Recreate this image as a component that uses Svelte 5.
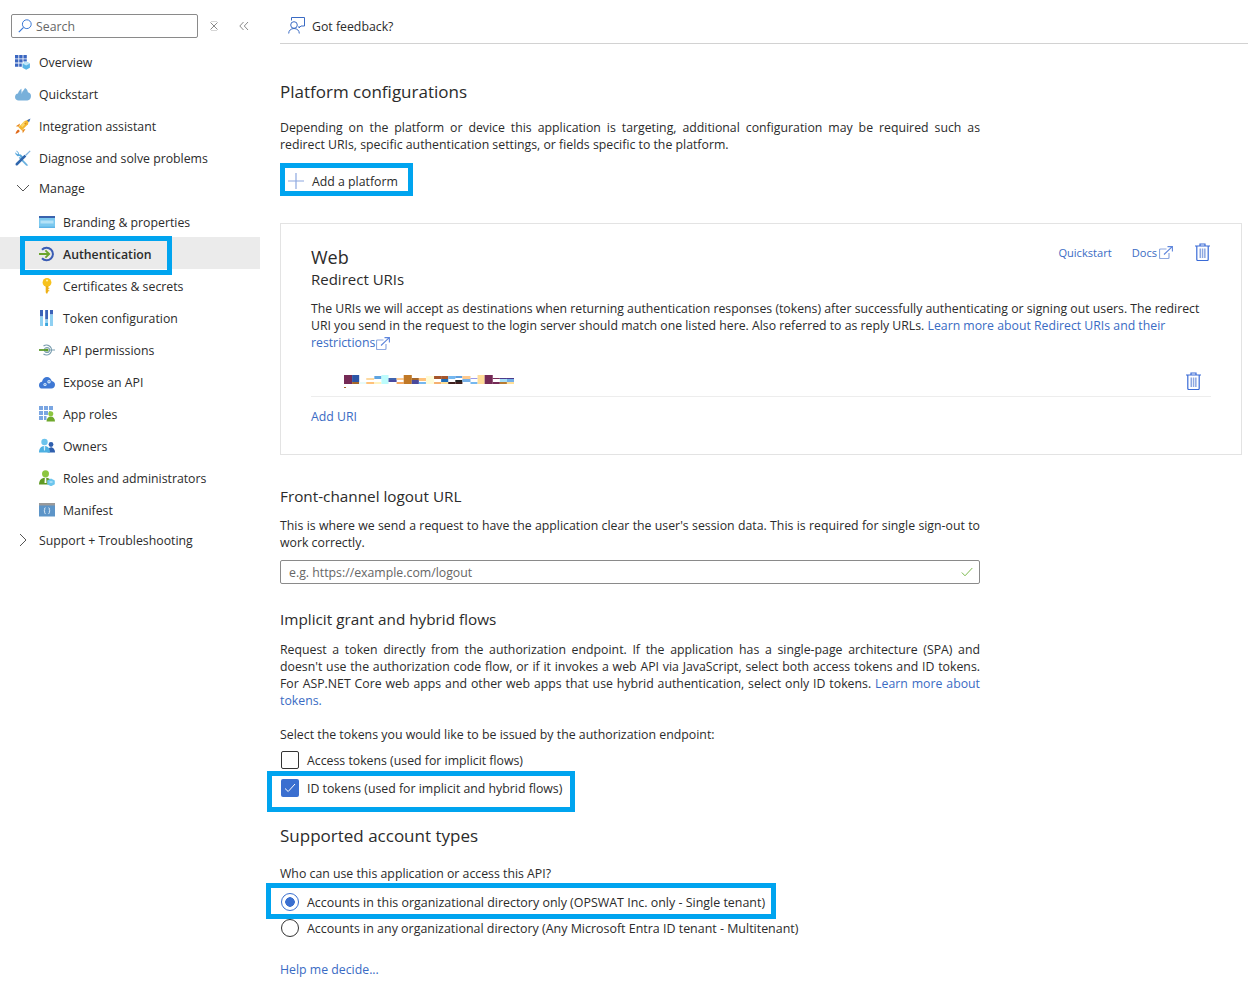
<script>
  const navTop = [
    { label: 'Overview', icon: 'overview' },
    { label: 'Quickstart', icon: 'quickstart' },
    { label: 'Integration assistant', icon: 'rocket' },
    { label: 'Diagnose and solve problems', icon: 'tools' }
  ];
  const navManage = [
    { label: 'Branding & properties', icon: 'branding' },
    { label: 'Authentication', icon: 'auth', active: true },
    { label: 'Certificates & secrets', icon: 'key' },
    { label: 'Token configuration', icon: 'token' },
    { label: 'API permissions', icon: 'api' },
    { label: 'Expose an API', icon: 'expose' },
    { label: 'App roles', icon: 'roles' },
    { label: 'Owners', icon: 'owners' },
    { label: 'Roles and administrators', icon: 'admins' },
    { label: 'Manifest', icon: 'manifest' }
  ];
  // blurred-out redirect uri, [x, y, w, h, colour]
  const redacted = [
    [0,0,8,9,'#752a56'],[8,0,7,7,'#2b55a6'],[8,7,7,2,'#a5662a'],[15,7,7,2,'#e6fbfb'],[22,3,8,2,'#fdd9a0'],[22,7,8,2,'#ffc27a'],
    [30,1,7,3,'#5ea4e0'],[30,4,7,3,'#fff'],[30,7,7,2,'#fff3c0'],[37,0,7,9,'#bdfcfc'],[44,3,8,2,'#3f63ae'],[44,5,8,2,'#4a4aa0'],[52,3,7,2,'#ffc98c'],[52,7,7,2,'#f5a860'],
    [59,0,8,9,'#c07826'],[67,3,7,2,'#a5662a'],[67,5,7,4,'#4a4a9c'],[74,3,7,3,'#ffc27a'],[74,7,7,2,'#75b8f0'],[81,1,8,8,'#fefbd8'],
    [89,1,7,3,'#a5552a'],[89,7,7,2,'#f5b070'],[96,1,7,3,'#a5552a'],[96,4,7,3,'#1f6db8'],[96,7,7,2,'#ffdf98'],[103,1,7,3,'#75b8f0'],[103,7,7,2,'#40201f'],
    [110,1,7,2,'#5e9fe0'],[110,5,7,2,'#222'],[110,7,7,2,'#40201f'],[117,1,8,3,'#ffc98c'],[117,4,8,3,'#75b0e8'],[125,3,7,1,'#9a9ae8'],[125,7,7,2,'#75b8f0'],
    [132,0,7,9,'#ffdd98'],[139,0,8,9,'#752a56'],[147,3,7,1,'#752a56'],[147,7,7,2,'#752a56'],[154,3,7,1,'#4a3a8c'],[154,4,7,3,'#a8e0f8'],[154,7,7,2,'#b87a30'],[161,3,7,1,'#4a3a8c'],[161,4,7,3,'#75b0e8'],[161,7,7,2,'#ffdf98'],
    [0,12,2,1,'#a5662a']
  ];
</script>

{#snippet navIcon(name)}
  <svg class="nav-icon" viewBox="0 0 16 16" width="16" height="16" aria-hidden="true">
    {#if name === 'overview'}
      <path fill="#3a66c0" d="M0 1h3.400v3.400H0zM4.200 1h3.400v3.400H4.200zM8.400 1h3.400v3.400H8.400zM0 5.200h3.400v3.400H0zM4.200 5.200h3.400v3.400H4.200zM8.400 5.200h3.400v2.400H8.400zM0 9.400h3.400v3.400H0zM4.200 9.400h2.600v3.400H4.200z"/>
      <path fill="#58b4e6" d="M7.500 9.500l3.700-2 3.700 2v4.200l-3.700 2-3.700-2z"/>
      <path fill="#bfe6f8" d="M7.500 9.500l3.700 2 3.700-2-3.700-2z"/>
    {:else if name === 'quickstart'}
      <path fill="#78b0da" d="M3.600 14.500C1.600 14.500 0 13 0 11c0-1.800 1.300-3.200 3-3.400C3.400 5.600 5 3.500 6.500 2.800L7.300 6l2.800-4c1.300.7 2.500 2.200 2.800 4.200 1.800.3 3.100 1.500 3.100 3.900 0 2.500-1.500 4.400-3.600 4.400z"/>
      <path fill="#cfe4f4" d="M7.300 6 6.500 2.800l-.6.5.8 4.700z"/>
    {:else if name === 'rocket'}
      <path fill="#e8891c" d="M5 5.500.8 8.200l3.400.5zM10.500 11l-2.700 4.300-.6-3.500z"/>
      <path fill="#e06a1a" d="M3.300 11.500c-1.400.8-2.500 2.500-2.800 4.200 1.800-.3 3.500-1.400 4.300-2.800z"/>
      <path fill="#f3b72e" d="M3.500 9.200 9.500 3 14 1.500 13 6.300 6.800 12.500z"/>
      <path fill="#fbd869" d="M6 7 9.500 3l2 2-4.500 4.500z"/>
      <circle cx="10.400" cy="5.600" r="1" fill="#e08a1a"/>
      <path fill="#3f6fb8" d="M12 2.200 15.500.5 14 4.200z"/>
    {:else if name === 'tools'}
      <path fill="#5aa8dc" d="M1.700 .6 4 2.900l-.1 1.400 2 .3L8 6.800 6.700 8.200 4.500 6 2.500 6.200.4 4 .3 2.200l2 2 1-.9-2-2z"/>
      <path fill="#5aa8dc" d="M5.200 7 7 8.800 12 14l1.200 1.600-1.900.2-6.600-6.900-1-1.500z" opacity=".9"/>
      <path fill="#2f66ad" d="M.8 13.300 9.500 4.700l1.800 1.800-8.700 8.800c-.5.400-1.300.4-1.800 0-.4-.6-.4-1.500 0-2z"/>
      <path fill="#7fb3df" d="M10 5 14.800.4l.8.8L11 6z"/>
    {:else if name === 'branding'}
      <rect x="0" y="2" width="16" height="12" fill="#7cc9ef"/>
      <rect x="0" y="2" width="16" height="2" fill="#3a62ad"/>
      <rect x="0" y="12.600" width="16" height="1.400" fill="#5eb4e6"/>
      <rect x="1.500" y="6.500" width="13" height="3" fill="#b4e2f7"/>
    {:else if name === 'auth'}
      <path fill="none" stroke="#3a5cb4" stroke-width="2" d="M3 3.700A6.300 6.300 0 1 1 3 12.300"/>
      <path fill="none" stroke="#6aa52d" stroke-width="1.800" d="M0 8h10M6.400 4.300 10.200 8l-3.800 3.700"/>
    {:else if name === 'key'}
      <circle cx="8" cy="4.400" r="4.400" fill="#f7c21d"/>
      <circle cx="8" cy="2.400" r="1" fill="#fff2b8"/>
      <path fill="#eeb015" d="M6.700 8h2.600v1.800h1v1h-1v1.400h1v1h-1L8 16l-1.300-1.500z"/>
    {:else if name === 'token'}
      <path fill="#3c62b8" d="M1 0h3v6.500H1zM6.200 0h2.800v9.500H6.200zM11 0h3v4.500h-3z"/>
      <path fill="#8fd0f2" d="M1 6.500h3V16H1zM6.200 9.500h2.800V16H6.200zM11 4.500h3V16h-3z"/>
      <path fill="#3aa5dc" d="M6.200 13h2.800v3H6.200z"/>
    {:else if name === 'api'}
      <path fill="none" stroke="#7a9eb0" stroke-width="1.200" d="M4.500 4a5 5 0 1 1 0 8M11 8h5"/>
      <circle cx="8" cy="8" r="2.500" fill="#fff" stroke="#7a9eb0" stroke-width="1.200"/>
      <path fill="none" stroke="#5c9a2e" stroke-width="1.800" d="M0 8h8"/>
      <circle cx="8" cy="8" r="1.500" fill="#5c9a2e"/>
    {:else if name === 'expose'}
      <path fill="#3e78d4" d="M3.500 14.500A3.400 3.400 0 0 1 0 11C0 9.200 1.300 7.900 3 7.800 3.600 5 5.600 3 8 3c2.300 0 4.200 1.700 4.700 4 1.900.2 3.300 1.700 3.300 3.700 0 2.100-1.600 3.800-3.600 3.800z"/>
      <circle cx="6" cy="10.500" r="1.600" fill="#d8ecfa"/>
      <circle cx="10" cy="7.700" r="1.700" fill="#d8ecfa"/>
      <circle cx="6" cy="10.500" r=".6" fill="#3e78d4"/>
      <circle cx="10" cy="7.700" r=".6" fill="#3e78d4"/>
    {:else if name === 'roles'}
      <path fill="#7aa6e2" d="M0 0h4v4H0zM5 0h4v4H5zM10 0h4v4h-4zM0 5h4v4H0zM5 5h4v4H5zM10 5h1.500v1H10zM0 10h4v4H0zM5 10h2.500v4H5z"/>
      <circle cx="11.800" cy="7.800" r="2.500" fill="#8cc63f"/>
      <path fill="#6fa82c" d="M7.500 15.500c0-3 1.800-5 4.300-5s4.200 2 4.200 5z"/>
    {:else if name === 'owners'}
      <circle cx="12" cy="6.500" r="2.400" fill="#2f5fae"/>
      <path fill="#2f5fae" d="M8.500 14.500c0-3 1.500-5.200 3.500-5.200s4 2.200 4 5.200z"/>
      <circle cx="5.500" cy="4" r="3.200" fill="#6cc3ec"/>
      <path fill="#4db0e2" d="M0 14.500c0-4 2-6.500 5.500-6.500s5.500 2.500 5.500 6.500z"/>
      <path fill="#d4eefa" d="M4.700 8h1.600l-.3 4.500h-1z"/>
    {:else if name === 'admins'}
      <circle cx="6.500" cy="3.800" r="3.500" fill="#8cc63f"/>
      <path fill="#5f9a24" d="M0 14.500C0 10.500 2.300 7.800 6.500 7.800s6.500 2.700 6.500 6.700z"/>
      <path fill="#fff" d="M5.800 8h1.400l.3 5H5.500z"/>
      <path fill="#6cc6ee" d="M12 8.500l3.800 2v3.800L12 16.300l-3.800-2v-3.800z"/>
      <path fill="#bfe6f8" d="M10.500 11.300h3v1.400h-3z"/>
    {:else if name === 'manifest'}
      <rect x="0" y="1" width="16" height="13.500" fill="#5d95c8"/>
      <rect x="0" y="1" width="16" height="2.500" fill="#9a9a9a"/>
      <path fill="none" stroke="#e6f2fb" d="M6.500 5.800c-1.200 0-.8 1-.8 1.700 0 .8-.2 1-.8 1.200.6.200.8.400.8 1.200 0 .7-.4 1.700.8 1.700M9.500 5.800c1.200 0 .8 1 .8 1.700 0 .8.200 1 .8 1.200-.6.200-.8.400-.8 1.200 0 .7.400 1.700-.8 1.700"/>
    {/if}
  </svg>
{/snippet}

{#snippet trash()}
  <svg class="trash" viewBox="0 0 15 18" width="15" height="18" aria-hidden="true">
    <path fill="none" stroke="#3a6bd6" stroke-width="1.200" d="M0 3h15M5 3V1h5v2M1.800 3v13.500a1 1 0 0 0 1 1h9.400a1 1 0 0 0 1-1V3"/>
    <path fill="#8ea8e0" d="M4.500 5.500h1.500v9.500H4.500zM6.800 5.500h1.500v9.500H6.800zM9.100 5.500h1.500v9.500H9.100z"/>
  </svg>
{/snippet}

{#snippet external()}
  <svg class="ext" viewBox="0 0 14 13" width="14" height="13" aria-hidden="true">
    <path fill="none" stroke="#8ea8e0" stroke-width="1.200" d="M7.500 3H1.500a1 1 0 0 0-1 1v7.500a1 1 0 0 0 1 1H9a1 1 0 0 0 1-1V7"/>
    <path fill="none" stroke="#5f86dc" stroke-width="1.100" d="M5 8.500 13 .8M8.500.6h4.900v4.900"/>
  </svg>
{/snippet}

<div class="page">
  <aside class="sidebar">
    <div class="search-row">
      <div class="search">
        <svg viewBox="0 0 14 14" width="14" height="14" aria-hidden="true">
          <circle cx="8.800" cy="5.200" r="4.400" fill="none" stroke="#3a78d6" stroke-width="1"/>
          <path stroke="#3a78d6" stroke-width="1.200" d="M5.600 8.400 .8 13.200"/>
        </svg>
        <span>Search</span>
      </div>
      <svg class="tool" viewBox="0 0 10 10" width="10" height="10" aria-hidden="true">
        <path fill="none" stroke="#8a8a8a" d="M1.500 1.500l7 7M8.500 1.500l-7 7"/>
        <path fill="none" stroke="#8a8a8a" d="M2 .5h6M2 9.500h6" opacity=".35"/>
      </svg>
      <svg class="tool" viewBox="0 0 10 10" width="10" height="10" aria-hidden="true">
        <path fill="none" stroke="#8a8a8a" d="M4.500 1 .8 5l3.700 4M9 1 5.300 5 9 9"/>
      </svg>
    </div>

    <nav class="nav">
      {#each navTop as item}
        <div class="nav-row">{@render navIcon(item.icon)}<span>{item.label}</span></div>
      {/each}
      <div class="nav-group">
        <svg class="chev" viewBox="0 0 14 14" width="14" height="14" aria-hidden="true"><path fill="none" stroke="#555" d="M1 4l6 6 6-6"/></svg>
        <span>Manage</span>
      </div>
      <div class="sub-list">
        {#each navManage as item}
          <div class="nav-row sub" class:active={item.active}>
            {@render navIcon(item.icon)}<span>{item.label}</span>
            {#if item.active}<div class="mark mark-auth"></div>{/if}
          </div>
        {/each}
      </div>
      <div class="nav-group">
        <svg class="chev" viewBox="0 0 14 14" width="14" height="14" aria-hidden="true"><path fill="none" stroke="#555" d="M4 1l6 6-6 6"/></svg>
        <span>Support + Troubleshooting</span>
      </div>
    </nav>
  </aside>

  <main class="main">
    <header class="topbar">
      <svg viewBox="0 0 17 17" width="17" height="17" aria-hidden="true">
        <circle cx="6" cy="8" r="3.300" fill="none" stroke="#3a6bc4"/>
        <path fill="none" stroke="#3a6bc4" d="M.7 16.500c0-3 2.200-5 5.300-5s5.300 2 5.300 5"/>
        <path fill="none" stroke="#3a6bc4" d="M3.500 3.500V.5h13v8.500H13l-2 2V9"/>
      </svg>
      <span>Got feedback?</span>
    </header>

    <section class="col">
      <h2 class="h-lg first">Platform configurations</h2>
      <p class="just">Depending on the platform or device this application is targeting, additional configuration may be required such as redirect URIs, specific authentication settings, or fields specific to the platform.</p>
      <button class="add-btn" type="button">
        <svg viewBox="0 0 16 16" width="16" height="16" aria-hidden="true"><path stroke="#8ea8e0" stroke-width="1.200" d="M8 0v16M0 8h16"/></svg>
        <span>Add a platform</span>
      </button>
    </section>

    <section class="card">
      <div class="card-links">
        <a href="#q">Quickstart</a>
        <a href="#d" class="docs">Docs{@render external()}</a>
        {@render trash()}
      </div>
      <h3 class="card-title">Web</h3>
      <h4 class="card-sub">Redirect URIs</h4>
      <p class="card-text">The URIs we will accept as destinations when returning authentication responses (tokens) after successfully authenticating or signing out users. The redirect URI you send in the request to the login server should match one listed here. Also referred to as reply URLs. <a href="#r">Learn more about Redirect URIs and their restrictions{@render external()}</a></p>
      <div class="uri-row">
        <svg class="blur" viewBox="0 0 168 13" width="170" height="13" preserveAspectRatio="none" aria-hidden="true">
          {#each redacted as r}<rect x={r[0]} y={r[1]} width={r[2]} height={r[3]} fill={r[4]}/>{/each}
        </svg>
        {@render trash()}
      </div>
      <a class="add-uri" href="#a">Add URI</a>
    </section>

    <section class="col">
      <h3 class="h-md front">Front-channel logout URL</h3>
      <p class="just">This is where we send a request to have the application clear the user's session data. This is required for single sign-out to work correctly.</p>
      <div class="field">
        <span>e.g. https://example.com/logout</span>
        <svg viewBox="0 0 12 10" width="12" height="10" aria-hidden="true"><path fill="none" stroke="#7dba4f" d="M.8 5.500 4 8.800 11.300 1"/></svg>
      </div>

      <h3 class="h-md implicit">Implicit grant and hybrid flows</h3>
      <p class="just">Request a token directly from the authorization endpoint. If the application has a single-page architecture (SPA) and doesn't use the authorization code flow, or if it invokes a web API via JavaScript, select both access tokens and ID tokens. For ASP.NET Core web apps and other web apps that use hybrid authentication, select only ID tokens. <a href="#t">Learn more about tokens.</a></p>
      <p class="select-label">Select the tokens you would like to be issued by the authorization endpoint:</p>

      <div class="check-row">
        <span class="box"></span>
        <span>Access tokens (used for implicit flows)</span>
      </div>
      <div class="check-row second">
        <span class="box on">
          <svg viewBox="0 0 12 10" width="12" height="10" aria-hidden="true"><path fill="none" stroke="#fff" d="M1 5.500 4.200 8.500 11 1"/></svg>
        </span>
        <span>ID tokens (used for implicit and hybrid flows)</span>
        <div class="mark mark-id"></div>
      </div>

      <h2 class="h-lg supported">Supported account types</h2>
      <p class="who">Who can use this application or access this API?</p>
      <div class="check-row radio-first">
        <span class="radio on"></span>
        <span>Accounts in this organizational directory only (OPSWAT Inc. only - Single tenant)</span>
        <div class="mark mark-acct"></div>
      </div>
      <div class="check-row radio-second">
        <span class="radio"></span>
        <span>Accounts in any organizational directory (Any Microsoft Entra ID tenant - Multitenant)</span>
      </div>
      <a class="help" href="#h">Help me decide...</a>
    </section>
  </main>
</div>

<style>
  :global(body) {
    margin: 0;
    background: #fff;
  }

  .page {
    display: flex;
    width: 1248px;
    height: 996px;
    overflow: hidden;
    font-family: "Open Sans", "Noto Sans", sans-serif;
    font-size: 12.3px;
    line-height: 17px;
    color: #2b2b2b;
  }

  /* sidebar */
  .sidebar {
    flex: 0 0 260px;
    width: 260px;
  }

  .search-row {
    display: flex;
    align-items: center;
    height: 24px;
    margin: 14px 0 0 11px;
  }

  .search {
    display: flex;
    align-items: center;
    gap: 4px;
    box-sizing: border-box;
    width: 187px;
    height: 24px;
    padding-left: 6px;
    border: 1px solid #8a8a8a;
    border-radius: 2px;
    color: #666;
  }

  .tool {
    margin-left: 11px;
  }

  .tool + .tool {
    margin-left: 20px;
  }

  .nav {
    margin-top: 8px;
  }

  .nav-row {
    position: relative;
    display: flex;
    align-items: center;
    gap: 8px;
    height: 32px;
    padding-left: 15px;
  }

  .nav-row.sub {
    box-sizing: border-box;
    padding: 2px 0 0 39px;
  }

  .nav-row.active {
    background: #ebebeb;
    font-weight: 600;
  }

  .nav-group {
    display: flex;
    align-items: center;
    gap: 9px;
    height: 28px;
    padding-left: 16px;
  }

  .sub-list {
    margin: 3px 0 1px;
  }

  /* blue annotation rectangles drawn over the screenshot */
  .mark {
    position: absolute;
    box-sizing: border-box;
    border: 5px solid #00a4ef;
    pointer-events: none;
  }

  .mark-auth {
    left: 20px;
    top: -1px;
    width: 152px;
    height: 39px;
  }

  .mark-id {
    left: -13px;
    top: -8px;
    width: 308px;
    height: 41px;
  }

  .mark-acct {
    left: -14px;
    top: -10px;
    width: 510px;
    height: 36px;
  }

  /* main */
  .main {
    flex: 1;
    min-width: 0;
    padding-left: 20px;
  }

  .topbar {
    display: flex;
    align-items: center;
    gap: 7px;
    box-sizing: content-box;
    height: 33px;
    padding: 10px 0 0 8px;
    border-bottom: 1px solid #d2d2d2;
  }

  .topbar svg {
    margin-top: -2px;
  }

  .col {
    width: 700px;
  }

  p {
    margin: 0;
  }

  .just {
    text-align: justify;
  }

  a {
    color: #3a6bc4;
    text-decoration: none;
  }

  h2,
  h3,
  h4 {
    margin: 0;
    font-weight: 400;
  }

  .h-lg {
    font-size: 17px;
    line-height: 24px;
  }

  .h-md {
    font-size: 15.300px;
    line-height: 20px;
  }

  .first {
    margin: 36px 0 15px;
  }

  .add-btn {
    position: relative;
    display: flex;
    align-items: center;
    gap: 8px;
    box-sizing: border-box;
    width: 133px;
    height: 33px;
    margin-top: 10px;
    padding: 4px 0 0 8px;
    border: 5px solid #00a4ef;
    background: #fff;
    font: inherit;
    color: inherit;
  }

  .add-btn svg {
    margin: -2px 0 0 -5px;
  }

  .card {
    position: relative;
    box-sizing: border-box;
    width: 962px;
    height: 232px;
    margin-top: 27px;
    padding: 22px 30px 0;
    border: 1px solid #e3e3e3;
  }

  .card-links {
    position: absolute;
    top: 20px;
    right: 31px;
    display: flex;
    align-items: center;
    gap: 20px;
    font-size: 11.100px;
  }

  .card-links .trash {
    margin: -2px 0 0 2px;
  }

  .docs {
    display: flex;
    align-items: center;
    gap: 1px;
  }

  .card-title {
    font-size: 18px;
    line-height: 22px;
  }

  .card-sub {
    margin: 0 0 10px;
    font-size: 15px;
    line-height: 22px;
  }

  .card-text {
    font-size: 12.280px;
  }

  .ext {
    vertical-align: -3px;
    margin-left: 1px;
  }

  .uri-row {
    display: flex;
    align-items: center;
    justify-content: space-between;
    box-sizing: border-box;
    width: 900px;
    height: 42px;
    margin-top: 4px;
    padding: 11px 10px 0 33px;
    border-bottom: 1px solid #ededed;
  }

  .add-uri {
    display: block;
    margin-top: 11px;
  }

  .front {
    margin: 31px 0 11px;
  }

  .field {
    display: flex;
    align-items: center;
    justify-content: space-between;
    box-sizing: border-box;
    height: 24px;
    margin-top: 9px;
    padding: 0 6px 0 8px;
    border: 1px solid #8a8a8a;
    border-radius: 2px;
    color: #666;
  }

  .implicit {
    margin: 25px 0 12px;
  }

  .select-label {
    margin-top: 17px;
    font-size: 12.350px;
  }

  .check-row {
    position: relative;
    display: flex;
    align-items: center;
    gap: 8px;
    height: 18px;
    margin-top: 8px;
  }

  .check-row.second {
    margin-top: 10px;
  }

  .box,
  .radio {
    box-sizing: border-box;
    flex: 0 0 18px;
    width: 18px;
    height: 18px;
    margin-left: 1px;
    border: 1px solid #333;
  }

  .box {
    border-radius: 2px;
  }

  .box.on {
    display: flex;
    align-items: center;
    justify-content: center;
    border: 0;
    background: #3a6fd0;
  }

  .radio {
    border-radius: 50%;
    background: #fff;
  }

  .radio.on {
    border-color: #3a6fd0;
    background: radial-gradient(circle, #3a6fd0 0 4.500px, #fff 5px);
  }

  .supported {
    margin-top: 27px;
  }

  .who {
    margin-top: 17px;
  }

  .radio-first {
    margin-top: 11px;
    font-size: 12.450px;
  }

  .radio-second {
    margin-top: 8px;
    font-size: 12.450px;
  }

  .help {
    display: block;
    margin-top: 24px;
  }
</style>
